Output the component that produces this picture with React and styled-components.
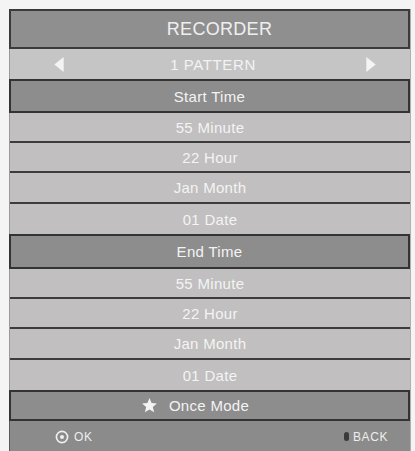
import styled, { createGlobalStyle } from "styled-components";

const GlobalStyle = createGlobalStyle`
    html, body {
        margin: 0;
        padding: 0;
        background: #f4f4f4;
        overflow: hidden;
    }
    body {
        font-family: "Liberation Sans", Arial, sans-serif;
    }
`;

const startItems = ["55 Minute", "22 Hour", "Jan Month", "01 Date"];
const endItems = ["55 Minute", "22 Hour", "Jan Month", "01 Date"];

export default function App() {
    return (
        <>
            <GlobalStyle />
            <Screen>
                <Panel>
                    <Title>RECORDER</Title>
                    <Selector>
                        <Arrow viewBox="0 0 10 16">
                            <polygon points="10,0 10,16 0,8" fill="#f4f4f4" />
                        </Arrow>
                        <span>1 PATTERN</span>
                        <Arrow viewBox="0 0 10 16">
                            <polygon points="0,0 0,16 10,8" fill="#f4f4f4" />
                        </Arrow>
                    </Selector>

                    <Section $height={34}>Start Time</Section>
                    {startItems.map((item, i) => (
                        <Item key={"s" + i} $last={i === startItems.length - 1} $height={i === 2 ? 31 : 30}>
                            {item}
                        </Item>
                    ))}

                    <Section $height={35}>End Time</Section>
                    {endItems.map((item, i) => (
                        <Item key={"e" + i} $last={i === endItems.length - 1} $height={i === 2 ? 31 : 30}>
                            {item}
                        </Item>
                    ))}

                    <Section $height={31}>
                        <Star viewBox="0 0 24 24">
                            <polygon
                                points="12,1.5 14.9,8.6 22.5,9.2 16.7,14.1 18.5,21.6 12,17.6 5.5,21.6 7.3,14.1 1.5,9.2 9.1,8.6"
                                fill="#f4f4f4"
                            />
                        </Star>
                        Once Mode
                    </Section>

                    <Footer>
                        <Hint>
                            <svg width="14" height="14" viewBox="0 0 14 14">
                                <circle cx="7" cy="7" r="5.6" fill="none" stroke="#f0f0f0" strokeWidth="1.6" />
                                <circle cx="7" cy="7" r="2" fill="#f0f0f0" />
                            </svg>
                            OK
                        </Hint>
                        <Hint>
                            <BackKey />
                            BACK
                        </Hint>
                    </Footer>
                </Panel>
            </Screen>
        </>
    );
}

const Screen = styled.div`
    padding: 9px 0 0 9px;
`;

const Panel = styled.div`
    width: 400px;
    display: flex;
    flex-direction: column;
    border-left: 1px solid #9a9a9a;
    border-right: 1px solid #b0b0b0;
    color: #f3f3f3;
`;

const Row = styled.div`
    box-sizing: border-box;
    display: flex;
    align-items: center;
    justify-content: center;
    font-size: 15px;
    letter-spacing: 0.3px;
`;

const Title = styled(Row)`
    height: 40px;
    background: #8f8f8f;
    border: 2px solid #3a3a3a;
    margin-left: -1px;
    font-size: 18px;
    padding-left: 20px;
    color: #efefef;
`;

const Selector = styled(Row)`
    height: 30px;
    background: #c6c5c5;
    justify-content: space-between;
    padding: 0 34px 0 44px;
    span {
        padding-right: 4px;
        letter-spacing: 0.6px;
    }
`;

const Arrow = styled.svg`
    width: 10px;
    height: 15px;
`;

const Section = styled(Row)`
    height: ${(p) => p.$height}px;
    background: #8e8d8d;
    border: 2px solid #333;
    margin-left: -1px;
    gap: 11px;
`;

const Item = styled(Row)`
    height: ${(p) => p.$height}px;
    background: #c1bfbf;
    border-bottom: ${(p) => (p.$last ? "none" : "2px solid #3c3c3c")};
    color: #f4f4f4;
`;

const Star = styled.svg`
    width: 17px;
    height: 17px;
    margin-left: -29px;
`;

const Footer = styled(Row)`
    height: 31px;
    background: #8b8b8b;
    justify-content: space-between;
    padding: 0 22px 0 45px;
    border-left: 1px solid #5a5a5a;
    margin-left: -1px;
`;

const Hint = styled.div`
    display: flex;
    align-items: center;
    gap: 5px;
    color: #eeeeee;
    font-size: 12px;
    letter-spacing: 0.6px;
`;

const BackKey = styled.span`
    width: 5px;
    height: 9px;
    border-radius: 3px;
    background: #3a3a3a;
    margin-right: -1px;
`;
